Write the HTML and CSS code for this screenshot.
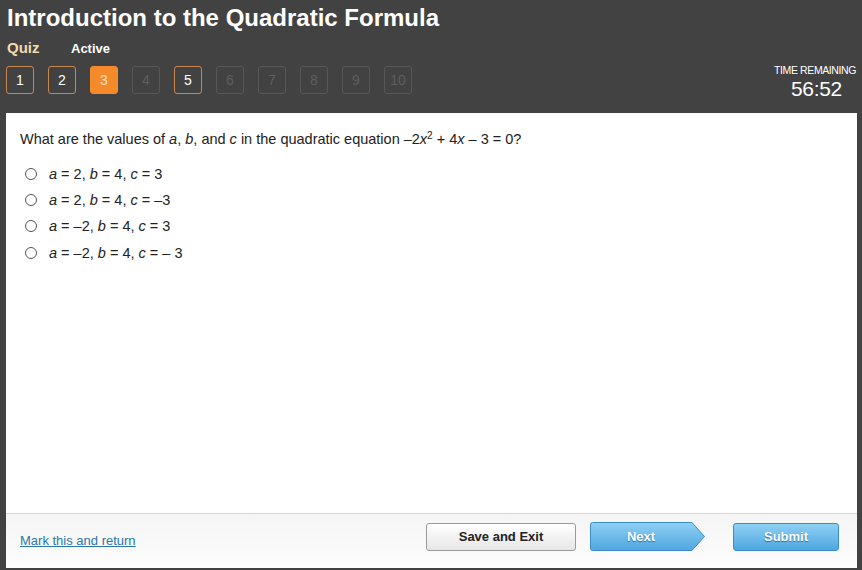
FILE: index.html
```html
<!DOCTYPE html>
<html>
<head>
<meta charset="utf-8">
<link rel="stylesheet" href="styles.css">
</head>
<body>
<div class="app">
  <header class="header">
    <div class="header-left">
      <h1 class="title">Introduction to the Quadratic Formula</h1>
      <div class="meta">
        <span class="quiz">Quiz</span>
        <span class="status">Active</span>
      </div>
      <div class="nav">
        <span class="nb visited">1</span>
        <span class="nb visited">2</span>
        <span class="nb current">3</span>
        <span class="nb off">4</span>
        <span class="nb visited">5</span>
        <span class="nb off">6</span>
        <span class="nb off">7</span>
        <span class="nb off">8</span>
        <span class="nb off">9</span>
        <span class="nb off">10</span>
      </div>
    </div>
    <div class="timer">
      <div class="timer-label">TIME REMAINING</div>
      <div class="timer-value">56:52</div>
    </div>
  </header>
  <main class="panel">
    <div class="content">
      <p class="question">What are the values of <i>a</i>, <i>b</i>, and <i>c</i> in the quadratic equation –2<i>x</i><sup>2</sup> + 4<i>x</i> – 3 = 0?</p>
      <ul class="options">
        <li class="opt"><span class="radio"></span><span><i>a</i> = 2, <i>b</i> = 4, <i>c</i> = 3</span></li>
        <li class="opt"><span class="radio"></span><span><i>a</i> = 2, <i>b</i> = 4, <i>c</i> = –3</span></li>
        <li class="opt"><span class="radio"></span><span><i>a</i> = –2, <i>b</i> = 4, <i>c</i> = 3</span></li>
        <li class="opt"><span class="radio"></span><span><i>a</i> = –2, <i>b</i> = 4, <i>c</i> = – 3</span></li>
      </ul>
    </div>
    <footer class="footer">
      <a class="mark" href="#">Mark this and return</a>
      <div class="actions">
        <button class="btn save">Save and Exit</button>
        <button class="btn next">
          <svg class="next-shape" width="116" height="29" viewBox="0 0 116 29">
            <defs>
              <linearGradient id="ng" x1="0" y1="0" x2="0" y2="1">
                <stop offset="0" stop-color="#8fd0f4"/>
                <stop offset="1" stop-color="#4ea7e0"/>
              </linearGradient>
            </defs>
            <path d="M2.5 0.5 H102 L114.5 14.5 L102 28.5 H2.5 Q0.5 28.5 0.5 26.5 V2.5 Q0.5 0.5 2.5 0.5 Z" fill="url(#ng)" stroke="#3b8dc8" stroke-width="1"/>
          </svg>
          <span class="next-label">Next</span>
        </button>
        <button class="btn submit">Submit</button>
      </div>
    </footer>
  </main>
</div>
</body>
</html>
```

FILE: styles.css
```css
* { box-sizing: border-box; }
html, body { margin: 0; padding: 0; }
body {
  background: #424242;
  font-family: "Liberation Sans", Arial, sans-serif;
  width: 862px;
  height: 570px;
  overflow: hidden;
}
.app {
  display: flex;
  flex-direction: column;
  height: 570px;
}
.header {
  height: 113px;
  display: flex;
  justify-content: space-between;
  padding: 0 6px 0 6px;
}
.title {
  margin: 0;
  padding-top: 4px;
  font-size: 24px;
  line-height: 27px;
  font-weight: bold;
  color: #ffffff;
  padding-left: 1px;
}
.meta {
  display: flex;
  align-items: baseline;
  margin-top: 8px;
  padding-left: 1px;
  height: 20px;
}
.quiz {
  color: #f3dcaa;
  font-weight: bold;
  font-size: 15px;
  width: 64px;
}
.status {
  color: #ffffff;
  font-weight: bold;
  font-size: 13px;
}
.nav {
  display: flex;
  gap: 14px;
  margin-top: 7px;
}
.nb {
  width: 28px;
  height: 28px;
  border-radius: 3px;
  border: 1px solid #c8874e;
  color: #ffffff;
  font-size: 14px;
  display: flex;
  align-items: center;
  justify-content: center;
}
.nb.current {
  background: #f48a2a;
  border-color: #f48a2a;
  color: #fde0c4;
}
.nb.off {
  border-color: #575757;
  color: #5f5f5f;
}
.timer {
  padding-top: 64px;
  text-align: right;
  color: #ffffff;
  margin-right: 0;
}
.timer-label {
  font-size: 10.5px;
  line-height: 13px;
  letter-spacing: -0.4px;
}
.timer-value {
  font-size: 21px;
  line-height: 24px;
  padding-right: 14px;
  letter-spacing: -0.3px;
}
.panel {
  flex: 1;
  margin: 0 5px 2px 6px;
  background: #ffffff;
  display: flex;
  flex-direction: column;
}
.content {
  flex: 1;
  padding: 16px 14px 0 14px;
}
.question {
  margin: 0;
  font-size: 14.5px;
  line-height: 20px;
  color: #222222;
}
.question sup {
  font-size: 10px;
  line-height: 0;
  vertical-align: 5px;
}
.options {
  list-style: none;
  margin: 12px 0 0 0;
  padding: 0 0 0 5px;
}
.opt {
  display: flex;
  align-items: center;
  height: 26px;
  font-size: 14.5px;
  color: #222222;
}
.opt:last-child {
  margin-top: 1px;
}
.radio {
  width: 12px;
  height: 12px;
  border: 1px solid #555555;
  border-radius: 50%;
  margin-right: 12px;
  background: #ffffff;
}
.footer {
  height: 55px;
  border-top: 1px solid #d6d6d6;
  background: linear-gradient(#f5f5f5, #fdfdfd);
  display: flex;
  align-items: flex-start;
  justify-content: space-between;
  padding: 8px 18px 0 14px;
}
.mark {
  color: #2a77a8;
  font-size: 13px;
  text-decoration: underline;
  margin-top: 11px;
}
.actions {
  display: flex;
  align-items: center;
}
.btn {
  height: 28px;
  font-family: "Liberation Sans", Arial, sans-serif;
  font-weight: bold;
  font-size: 13px;
  padding: 0;
  cursor: pointer;
}
.save {
  width: 150px;
  border: 1px solid #9a9a9a;
  border-radius: 3px;
  background: linear-gradient(#ffffff, #e6e6e6);
  color: #222222;
  margin-right: 14px;
  margin-left: 1px;
}
.next {
  position: relative;
  width: 116px;
  height: 29px;
  border: none;
  background: transparent;
  color: #ffffff;
  margin-right: 27px;
}
.next-shape {
  position: absolute;
  left: 0;
  top: 0;
}
.next-label {
  position: relative;
  display: block;
  width: 102px;
  text-shadow: 0 1px 1px #2c6e9c;
}
.submit {
  width: 106px;
  border: 1px solid #3b8dc8;
  border-radius: 3px;
  background: linear-gradient(#8fd0f4, #4ea7e0);
  color: #ffffff;
  text-shadow: 0 1px 1px #2c6e9c;
}
```
